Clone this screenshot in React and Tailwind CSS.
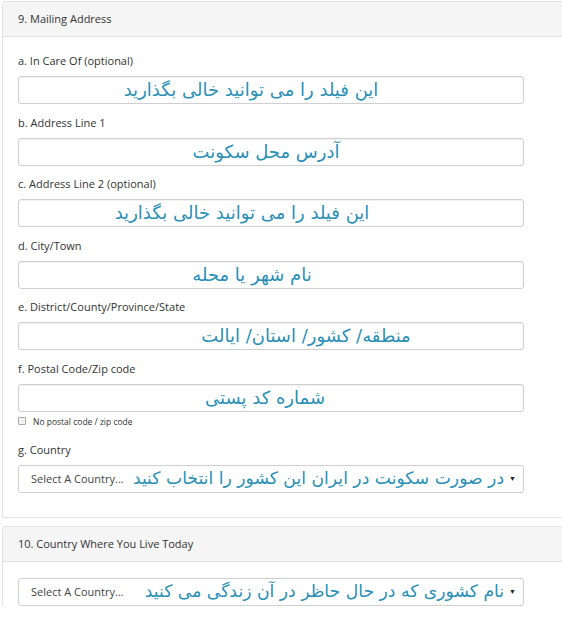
const fields = [
  { label: "a. In Care Of (optional)", value: "این فیلد را می توانید خالی بگذارید", shift: "pr-[40px]" },
  { label: "b. Address Line 1", value: "آدرس محل سکونت", shift: "pr-[10px]" },
  { label: "c. Address Line 2 (optional)", value: "این فیلد را می توانید خالی بگذارید", shift: "pr-[58px]" },
  { label: "d. City/Town", value: "نام شهر یا محله", shift: "pr-[38px]" },
  { label: "e. District/County/Province/State", value: "منطقه/ کشور/ استان/ ایالت", shift: "pl-[70px]" },
  { label: "f. Postal Code/Zip code", value: "شماره کد پستی", shift: "pr-[12px]" },
];

const Label = ({ children }) => (
  <div className="h-4 mb-[7px] text-[11px] leading-4 text-[#333]">{children}</div>
);

const TextBox = ({ value, shift }) => (
  <div
    dir="rtl"
    className={`w-[506px] h-[28px] border border-[#cfcfcf] rounded-[3px] shadow-[inset_0_1px_1px_rgba(0,0,0,0.06)] flex items-center justify-center text-[#2a8fb5] text-[18px] leading-none ${shift}`}
    style={{ fontFamily: '"DejaVu Sans", sans-serif' }}
  >
    {value}
  </div>
);

const CountrySelect = ({ hint }) => (
  <div className="w-[506px] h-[28px] border border-[#cfcfcf] rounded-[3px] flex items-center pl-[12px] pr-[7px]">
    <span className="shrink-0 text-[11px] text-[#444] whitespace-nowrap">Select A Country...</span>
    <span
      dir="rtl"
      className="flex-1 min-w-0 ml-[6px] text-right text-[#2a8fb5] text-[17.2px] leading-none whitespace-nowrap"
      style={{ fontFamily: '"DejaVu Sans", sans-serif' }}
    >
      {hint}
    </span>
    <span className="shrink-0 ml-[5px] text-[7px] text-[#222]">▼</span>
  </div>
);

const PanelHeader = ({ title }) => (
  <div className="h-[35px] bg-[#f5f5f5] border-b border-[#dedede] rounded-tl-[4px] flex items-center pl-[15px] text-[11px] text-[#333]">
    {title}
  </div>
);

export default function App() {
  return (
    <div
      className="w-[562px] h-[624px] bg-white overflow-hidden pt-[1px] pl-[2px]"
      style={{ fontFamily: '"Open Sans", "Noto Sans", sans-serif' }}
    >
      <div className="border-t border-l border-b border-[#e2e2e2] rounded-tl-[4px]">
        <PanelHeader title="9. Mailing Address" />
        <div className="pl-[15px] pt-[16px] pb-[24px]">
          {fields.map((f, i) => (
            <div key={f.label} className={i < fields.length - 1 ? "mb-[10.6px]" : ""}>
              <Label>{f.label}</Label>
              <TextBox value={f.value} shift={f.shift} />
            </div>
          ))}
          <div className="flex items-center gap-[7px] mt-[3px] h-[12px]">
            <span className="w-[8px] h-[8px] border border-[#aaa] bg-[#f2f2f2] rounded-[1px]" />
            <span className="text-[8.5px] text-[#333] mt-[3px]">No postal code / zip code</span>
          </div>
          <div className="mt-[15px]">
            <Label>g. Country</Label>
            <CountrySelect hint="در صورت سکونت در ایران این کشور را انتخاب کنید" />
          </div>
        </div>
      </div>

      <div className="mt-[8px] border-t border-l border-[#e2e2e2] rounded-tl-[4px]">
        <PanelHeader title="10. Country Where You Live Today" />
        <div className="pl-[15px] pt-[16px]">
          <CountrySelect hint="نام کشوری که در حال حاظر در آن زندگی می کنید" />
        </div>
      </div>
    </div>
  );
}
